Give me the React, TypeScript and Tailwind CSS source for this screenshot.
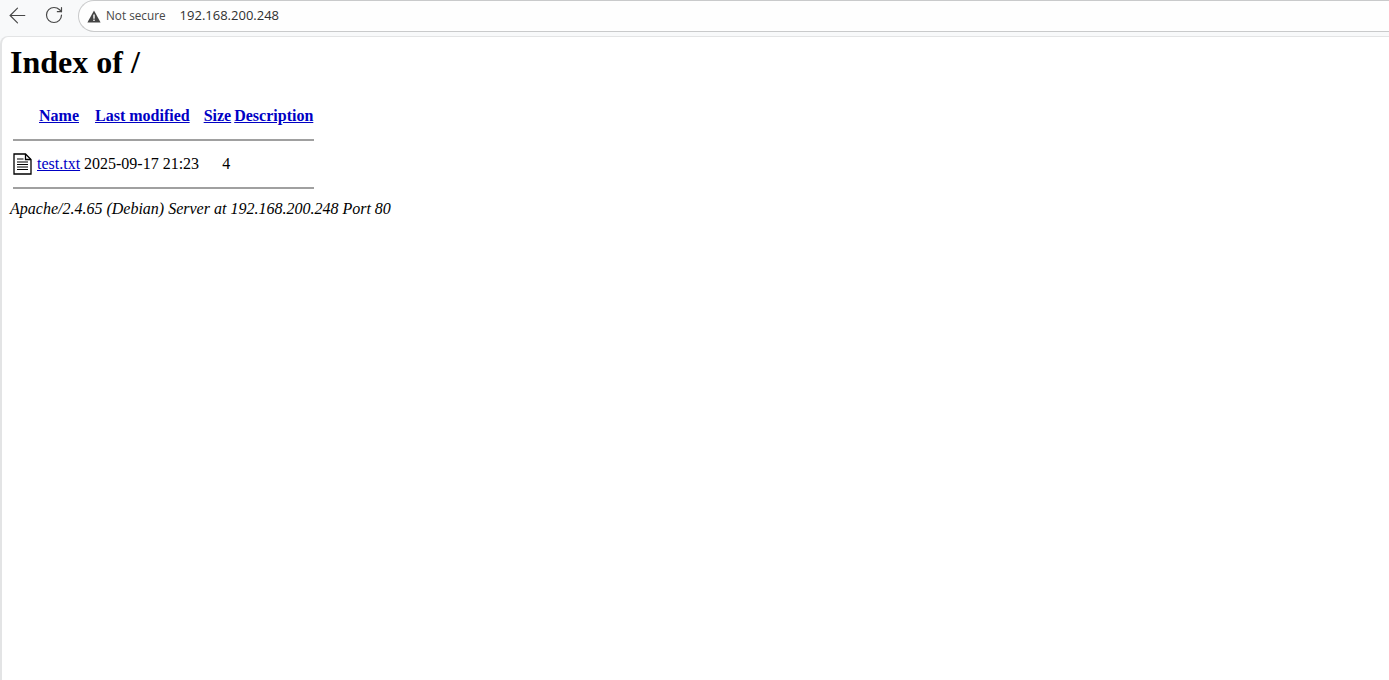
import { ArrowLeft, RotateCw } from 'lucide-react';

// Browser toolbar above the Apache directory listing
function Toolbar() {
  return (
    <div className="flex h-9 items-start bg-[#f8f9fa]">
      <div className="flex h-[30px] w-[78px] shrink-0 items-center text-[#474747]">
        <ArrowLeft className="ml-[5px] h-[25px] w-[25px]" strokeWidth={1.1} />
        <RotateCw className="ml-[14px] h-[20px] w-[20px]" strokeWidth={1.4} />
      </div>
      <div className="flex h-[32px] flex-1 items-center rounded-l-full border border-r-0 border-[#c9cacb] bg-[#fefefe] pl-[8px] font-['Open_Sans','Noto_Sans',sans-serif]">
        <svg viewBox="0 0 14 13" className="h-[13px] w-[14px] text-[#444]" fill="currentColor">
          <path d="M7 0.5 L13.6 12.5 L0.4 12.5 Z" />
          <rect x="6.3" y="4.5" width="1.4" height="4.2" fill="#fff" />
          <rect x="6.3" y="9.6" width="1.4" height="1.4" fill="#fff" />
        </svg>
        <span className="ml-[5px] text-[11.75px] font-medium text-[#474747]">Not secure</span>
        <span className="ml-[14px] text-[13px] text-[#303030]">192.168.200.248</span>
      </div>
    </div>
  );
}

function FileIcon() {
  return (
    <svg viewBox="0 0 19 22" className="h-[22px] w-[19px]" fill="none" stroke="#000">
      <path d="M1 1 H12.5 L18 6.5 V21 H1 Z" fill="#fff" strokeWidth="1.3" />
      <path d="M12.5 1 V6.5 H18" strokeWidth="1.3" />
      <path d="M4 6 H10.5 M4 9 H15 M4 11.5 H15 M4 14 H15 M4 16.5 H15" strokeWidth="1.2" />
    </svg>
  );
}

export default function App() {
  const linkClass = 'text-[#0000c4] underline';

  return (
    <div className="h-[680px] w-[1389px] overflow-hidden bg-[#f8f9fa] font-['Liberation_Serif',serif] text-[16px] text-black">
      <Toolbar />
      <div className="h-[644px] rounded-tl-[8px] border-l-2 border-t border-[#e3e4e5] bg-white pl-2">
        <h1 className="pt-[7px] text-[32px] font-bold leading-[37px]">Index of /</h1>
        <table className="ml-px mt-[23px] border-separate border-spacing-[2px] leading-[18px]">
          <tbody>
            <tr>
              <th className="w-[22px] p-0"></th>
              <th className="px-[2px] py-[1px] text-center font-bold">
                <a className={linkClass}>Name</a>
              </th>
              <th className="py-[1px] pl-[12px] pr-[11px] text-center font-bold">
                <a className={linkClass}>Last modified</a>
              </th>
              <th className="p-[1px] text-center font-bold">
                <a className={linkClass}>Size</a>
              </th>
              <th className="p-0 pr-px text-center font-bold">
                <a className={linkClass}>Description</a>
              </th>
            </tr>
            <tr>
              <th colSpan={5} className="p-0 pt-[11px] pb-[10px]">
                <hr className="border-t-2 border-[#a0a0a0]" />
              </th>
            </tr>
            <tr>
              <td className="p-0 align-middle">
                <FileIcon />
              </td>
              <td className="p-0 align-middle">
                <a className={linkClass}>test.txt</a>
              </td>
              <td className="p-0 pl-px align-middle whitespace-nowrap">2025-09-17 21:23</td>
              <td className="p-0 pr-[2px] text-right align-middle">4</td>
              <td className="p-0"></td>
            </tr>
            <tr>
              <th colSpan={5} className="p-0 pt-[10px] pb-[9px]">
                <hr className="border-t-2 border-[#a0a0a0]" />
              </th>
            </tr>
          </tbody>
        </table>
        <address className="italic leading-[18px]">Apache/2.4.65 (Debian) Server at 192.168.200.248 Port 80</address>
      </div>
    </div>
  );
}
